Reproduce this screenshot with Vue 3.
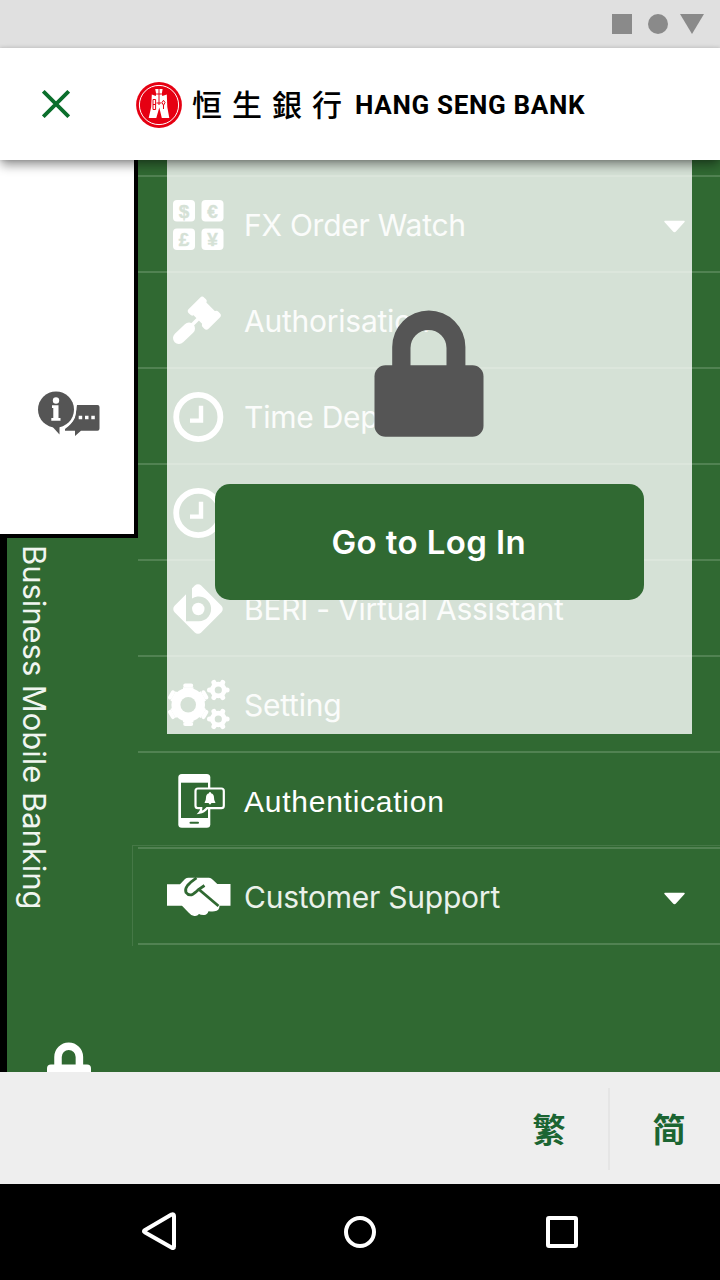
<script setup>
const rows = [
  { icon: 'fx', label: 'FX Order Watch', arrow: true },
  { icon: 'gavel', label: 'Authorisation' },
  { icon: 'clock', label: 'Time Deposit' },
  { icon: 'clock', label: '' },
  { icon: 'beri', label: 'BERI - Virtual Assistant' },
  { icon: 'gears', label: 'Setting' },
  { icon: 'phone', label: 'Authentication', style: 'sharp' },
  { icon: 'hands', label: 'Customer Support', arrow: true },
]
const tiles = [
  { x: 173, y: -24, s: '$' },
  { x: 201.5, y: -24, s: '€' },
  { x: 173, y: 4.5, s: '£' },
  { x: 201.5, y: 4.5, s: '¥' },
]
const smallGears = [-14, 15]
</script>

<template>
  <div class="screen">
    <div class="status">
      <svg width="92" height="20" viewBox="0 0 92 20" fill="#8a8a8a">
        <rect width="20" height="20" />
        <circle cx="46" cy="10" r="10" />
        <path d="M68 0H92L80 20Z" />
      </svg>
    </div>

    <header class="header">
      <svg class="close" width="28" height="28" viewBox="0 0 28 28">
        <path d="M1.3 1.3L26.7 26.7M26.7 1.3L1.3 26.7" stroke="#0b6f2c" stroke-width="3.8" />
      </svg>
      <svg class="emblem" width="46" height="46" viewBox="0 0 46 46">
        <circle cx="23" cy="23" r="22.9" fill="#e60012" />
        <circle cx="23" cy="23" r="19.6" fill="none" stroke="#fff" stroke-width="1" />
        <path d="M19.2 7H26.6L25.8 12L26.3 14L30.8 12.6L31.3 25L33.3 36H25.8L23.3 25.5L20.3 36H12.7L15.2 25L15.8 12.6L19.8 14L20.2 12Z" fill="#fff" />
        <path d="M23 7V23M20.2 12H25.8M20.5 21H25.5M17 17.5H19.6V27.5H17ZM17 22.5H19.6M27.5 18.3L29 20.5L27.5 23.3L26 20.5ZM27.5 23V27" fill="none" stroke="#e60012" stroke-width="1" />
      </svg>
      <span class="brand-zh">恒生銀行</span>
      <span class="brand-en">HANG SENG BANK</span>
    </header>

    <main class="body">
      <aside class="side">
        <div class="tab">
          <svg width="64" height="48" viewBox="37 390 64 48">
            <path d="M77 405H97.500Q99.500 405 99.500 407V428.500Q99.500 430.700 97.500 430.700H81L75 436V430.700H65V429Q72 424 75 417.500Z" fill="#555" />
            <circle cx="56" cy="409.500" r="20.300" fill="#fff" />
            <path d="M50 424L59.500 434.500V424Z" fill="#555" />
            <circle cx="56" cy="409.500" r="18" fill="#555" />
            <circle cx="56" cy="400.500" r="3.200" fill="#fff" />
            <path d="M52 405.300H58.500V418H60.500V420.700H51.300V418H53.300V408H52Z" fill="#fff" />
            <path d="M78.700 415.700h3.500v3.500h-3.500zM85 415.700h3.500v3.500H85zM91.300 415.700h3.500v3.500h-3.500z" fill="#fff" />
          </svg>
        </div>
        <div class="rail">
          <span class="vertical">Business Mobile Banking</span>
          <svg class="rail-lock" width="44" height="30" viewBox="47 1042 44 30">
            <path d="M58 1067V1057A10.700 10.700 0 0 1 79.400 1057V1067" fill="none" stroke="#fff" stroke-width="7.500" />
            <rect x="47" y="1064.500" width="44" height="30" rx="4" fill="#fff" />
          </svg>
        </div>
      </aside>

      <section class="menu">
        <div class="edge"></div>
        <div v-for="(row, i) in rows" :key="i" class="row">
          <svg class="icon" width="66" height="60" viewBox="166 -30 66 60">
            <g v-if="row.icon === 'fx'">
              <template v-for="t in tiles" :key="t.s">
                <rect :x="t.x" :y="t.y" width="22" height="21.500" rx="4" fill="#fff" />
                <text :x="t.x + 11" :y="t.y + 17.500" class="coin">{{ t.s }}</text>
              </template>
            </g>
            <g v-else-if="row.icon === 'gavel'" fill="#fff">
              <g transform="translate(204.300 -6.800) rotate(45)">
                <rect x="-14" y="-11" width="8" height="22" rx="3" />
                <rect x="6" y="-11" width="8" height="22" rx="3" />
                <rect x="-9" y="-9" width="18" height="18" />
              </g>
              <path d="M200 -3L190 7" stroke="#fff" stroke-width="3.500" />
              <path d="M189 8.500L179 18" stroke="#fff" stroke-width="12" stroke-linecap="round" />
            </g>
            <g v-else-if="row.icon === 'clock'" fill="none" stroke="#fff">
              <circle cx="198.300" cy="1" r="22.100" stroke-width="5.800" />
              <path d="M201 -10.200V4.600H190" stroke-width="4.400" />
            </g>
            <g v-else-if="row.icon === 'beri'">
              <rect x="-18.800" y="-18.800" width="37.600" height="37.600" rx="4.500" transform="translate(198 1) rotate(45)" fill="#fff" />
              <path d="M186 -24H192V-9.500A12.400 12.400 0 1 1 198.500 13.300H186Z" fill="#306932" />
              <circle cx="198.300" cy="1" r="6.200" fill="#fff" />
            </g>
            <g v-else-if="row.icon === 'gears'">
              <g transform="translate(188.200 .700)">
                <circle r="16.800" fill="#fff" />
                <path d="M0 -17.500V17.500M-15.200 -8.800L15.200 8.800M-15.200 8.800L15.200 -8.800" stroke="#fff" stroke-width="10.500" />
                <path d="M-3 -19.300H3M-3 19.300H3M-18.200 -7.200L-15.200 -12.400M18.200 -7.200L15.200 -12.400M-18.200 7.200L-15.200 12.400M18.200 7.200L15.200 12.400" stroke="#fff" stroke-width="4" stroke-linecap="round" />
                <circle r="7.800" fill="#306932" />
              </g>
              <g v-for="y in smallGears" :key="y" :transform="`translate(218.300 ${y})`">
                <circle r="8.300" fill="#fff" />
                <path d="M-8.800 0H8.800M-4.400 -7.600L4.400 7.600M4.400 -7.600L-4.400 7.600" stroke="#fff" stroke-width="5" stroke-linecap="round" />
                <circle r="3.600" fill="#306932" />
              </g>
            </g>
            <g v-else-if="row.icon === 'phone'">
              <rect x="178.300" y="-26" width="32" height="53.700" rx="3.500" fill="#fff" />
              <path d="M181 -17.300H208V18H181Z" fill="#306932" />
              <path d="M190.500 22.700H198" stroke="#306932" stroke-width="2" stroke-linecap="round" />
              <path d="M198 -11.500H221.300Q223.800 -11.500 223.800 -9V5.700Q223.800 8.200 221.300 8.200H207Q204 12 199.500 12.700Q201.500 10.500 201.300 8.200H198Q195.500 8.200 195.500 5.700V-9Q195.500 -11.500 198 -11.500Z" fill="#306932" stroke="#fff" stroke-width="2.200" />
              <path d="M210 -8Q211 -8 211 -6.800Q214 -6 214 -2.500Q214 1 215.300 2.300V3H204.700V2.300Q206 1 206 -2.500Q206 -6 209 -6.800Q209 -8 210 -8ZM208.500 3H211.500L210 4.800Z" fill="#fff" />
            </g>
            <g v-else>
              <path d="M167 -11.700H180L185 -17Q186.500 -18.200 188.500 -18.200H209Q211 -18.200 212.500 -16.500L217.300 -12H230.500V9.800H219.500Q219.500 15 214.500 15.200Q211 15.500 208.500 15.300Q207 19.500 203.500 19Q200.500 18.800 199 18Q197 20.500 193.500 19.700Q190.500 19 188.500 16.500L182 9.700H167Z" fill="#fff" />
              <path d="M196.500 -18.200Q191 -14.500 187.500 -10.500Q184.700 -7 186 -3.500Q188 -.600 191.500 -1.200Q194 -2 198.500 -6.500L204.500 -10.500M199 -6.500L218.500 10" fill="none" stroke="#306932" stroke-width="2.800" />
            </g>
          </svg>
          <span class="label" :class="row.style">{{ row.label }}</span>
          <svg v-if="row.arrow" class="arrow" width="23" height="13" viewBox="0 0 23 13">
            <path d="M2 1.500H21L12.600 10.800Q11.500 12 10.400 10.800Z" fill="#fff" stroke="#fff" stroke-width="1.500" stroke-linejoin="round" />
          </svg>
        </div>
      </section>

      <div class="outline"></div>

      <div class="veil">
        <svg class="lock" width="110" height="128" viewBox="374.500 310 110 128">
          <path d="M392.700 368V347A36.600 36.600 0 0 1 465.900 347V368H447V348A18 18 0 0 0 411 348V368Z" fill="#555" />
          <rect x="375" y="365.300" width="109" height="71.500" rx="11" fill="#555" />
        </svg>
        <button class="login"><span>Go to Log In</span></button>
      </div>
    </main>

    <footer class="langs">
      <span class="lang tc">繁</span>
      <i class="divider"></i>
      <span class="lang sc">简</span>
    </footer>

    <nav class="nav">
      <svg width="720" height="96" viewBox="0 1184 720 96" fill="none" stroke="#fff" stroke-width="4" stroke-linejoin="round">
        <path d="M144.700 1230.200L171.500 1214.500Q174 1213.500 174 1216V1246.500Q174 1249 171.500 1247.500L144.700 1232.200Q143.200 1231.200 144.700 1230.200Z" />
        <circle cx="360" cy="1232" r="14" />
        <rect x="548" y="1218" width="28" height="28" rx="1" />
      </svg>
    </nav>
  </div>
</template>

<style>
body {
  margin: 0;
}
</style>

<style scoped>
.screen {
  width: 720px;
  height: 1280px;
  display: flex;
  flex-direction: column;
  overflow: hidden;
  background: #306932;
  font-family: Inter, "Liberation Sans", sans-serif;
}
.status {
  height: 48px;
  flex: none;
  background: #e0e0e0;
  display: flex;
  justify-content: flex-end;
  align-items: center;
  padding-right: 16px;
  box-sizing: border-box;
}
.header {
  position: relative;
  z-index: 3;
  height: 112px;
  flex: none;
  box-sizing: border-box;
  padding-left: 42px;
  display: flex;
  align-items: center;
  background: #fff;
  box-shadow: 0 6px 10px -1px rgba(0, 0, 0, .42), 0 0 4px rgba(0, 0, 0, .16);
}
.emblem {
  margin: 1px 0 0 66px;
}
.brand-zh {
  margin: -2px 0 0 10px;
  width: 163px;
  font: 500 30px/40px "Noto Sans CJK TC", sans-serif;
  letter-spacing: 10px;
  white-space: nowrap;
  color: #000;
}
.brand-en {
  margin-top: 2px;
  font: 700 26px/32px Roboto, "Liberation Sans", sans-serif;
  letter-spacing: .68px;
  white-space: nowrap;
  color: #000;
}
.body {
  position: relative;
  height: 912px;
  flex: none;
  display: flex;
  overflow: hidden;
}
.side {
  width: 138px;
  flex: none;
  display: flex;
  flex-direction: column;
}
.tab {
  height: 378px;
  flex: none;
  box-sizing: border-box;
  border-right: 4px solid #000;
  border-bottom: 4px solid #000;
  background: #fff;
  padding: 230px 0 0 37px;
}
.rail {
  flex: 1;
  border-left: 7px solid #000;
  display: flex;
  flex-direction: column;
  align-items: flex-start;
}
.vertical {
  writing-mode: vertical-rl;
  margin: 7px 0 0 7px;
  font-size: 31px;
  font-weight: 400;
  line-height: 40px;
  height: 489px;
  letter-spacing: -.05px;
  white-space: nowrap;
  color: #f0f5f0;
}
.rail-lock {
  margin: 8px 0 0 40px;
}
.menu {
  flex: 1;
}
.edge {
  height: 17px;
  box-sizing: border-box;
  border-bottom: 2px solid #518252;
}
.row {
  height: 96px;
  box-sizing: border-box;
  border-bottom: 2px solid #518252;
  padding: 0 34px 0 28px;
  display: flex;
  align-items: center;
}
.icon {
  flex: none;
}
.label {
  margin: 2px 0 0 12px;
  font-size: 30px;
  font-weight: 400;
  line-height: 40px;
  letter-spacing: -.24px;
  white-space: nowrap;
  color: #eaf1ea;
}
.sharp {
  margin-top: 3px;
  font-family: "Liberation Sans", Arial, sans-serif;
  letter-spacing: .75px;
  color: #fff;
}
.arrow {
  margin: 5px 0 0 auto;
}
.coin {
  font: 700 19px "Liberation Sans", sans-serif;
  text-anchor: middle;
  fill: #306932;
  stroke: #306932;
  stroke-width: .5px;
}
.outline {
  position: absolute;
  left: 132px;
  top: 685px;
  width: 600px;
  height: 101px;
  box-sizing: border-box;
  border-left: 1px solid #457846;
  border-top: 1px solid #457846;
}
.veil {
  position: absolute;
  left: 167px;
  top: 0;
  width: 524.5px;
  height: 574px;
  background: rgba(255, 255, 255, .8);
  display: flex;
  flex-direction: column;
  align-items: center;
}
.lock {
  margin: 150px 0 0 .4px;
}
.login {
  margin-top: 46px;
  width: 429px;
  height: 115.5px;
  flex: none;
  border: 0;
  border-radius: 15px;
  background: #306932;
  color: #fff;
  font: 600 33px/40px Inter, sans-serif;
  letter-spacing: .4px;
  padding: 0 1px 0 0;
  white-space: nowrap;
}
.langs {
  height: 112px;
  flex: none;
  background: #eee;
  display: flex;
  justify-content: flex-end;
}
.lang {
  width: 120px;
  text-align: center;
  line-height: 112px;
  font-size: 33px;
  font-weight: 700;
  color: #1b6532;
}
.tc {
  font-family: "Noto Sans CJK TC", sans-serif;
  margin-right: -1px;
  padding-left: 1px;
}
.sc {
  font-family: "Noto Sans CJK SC", sans-serif;
  margin-right: -8px;
  width: 118px;
}
.divider {
  width: 2px;
  height: 82px;
  margin-top: 16px;
  background: #e5e5e5;
}
.nav {
  height: 96px;
  flex: none;
  background: #000;
}
.nav svg {
  display: block;
}
</style>
